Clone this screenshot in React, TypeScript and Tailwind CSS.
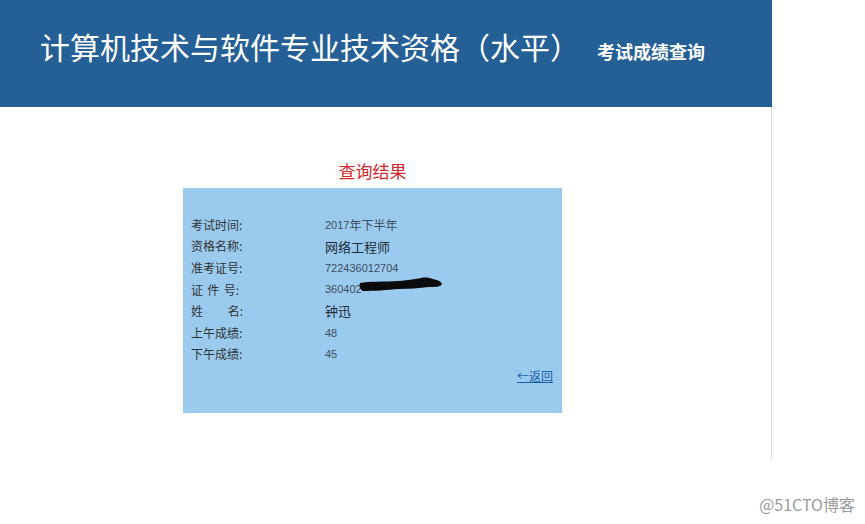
const rows: { label: React.ReactNode; value: React.ReactNode }[] = [
  {
    label: "考试时间:",
    value: (
      <>
        <span className="font-['Liberation_Sans',sans-serif] text-[11px]">2017</span>
        <span>年下半年</span>
      </>
    ),
  },
  { label: "资格名称:", value: <span className="text-[13px] text-[#1f2a36]">网络工程师</span> },
  {
    label: "准考证号:",
    value: <span className="font-['Liberation_Sans',sans-serif] text-[11px]">722436012704</span>,
  },
  {
    label: <span className="flex w-[52px] justify-between pr-[4px]"><span>证</span><span>件</span><span>号:</span></span>,
    value: <span className="font-['Liberation_Sans',sans-serif] text-[11px]">360402</span>,
  },
  {
    label: <span className="flex w-[52px] justify-between"><span>姓</span><span>名:</span></span>,
    value: <span className="text-[13px] text-[#1f2a36]">钟迅</span>,
  },
  { label: "上午成绩:", value: <span className="font-['Liberation_Sans',sans-serif] text-[11px]">48</span> },
  { label: "下午成绩:", value: <span className="font-['Liberation_Sans',sans-serif] text-[11px]">45</span> },
];

export default function App() {
  return (
    <main className="relative h-[524px] w-[865px] overflow-hidden bg-white font-['Noto_Sans_CJK_SC',sans-serif]">
      <div className="w-[772px]">
        {/* 页头 */}
        <header className="flex h-[107px] items-baseline bg-[#246096] pl-[40px] pt-[26px] text-white">
          <h1 className="font-['Noto_Sans_CJK_SC',sans-serif] text-[30px] leading-[40px]">
            计算机技术与软件专业技术资格（水平）
          </h1>
          <span className="ml-[17px] text-[18px] font-bold">考试成绩查询</span>
        </header>

        {/* 结果区 */}
        <section className="flex h-[353px] flex-col items-center border-r border-[#dcdcdc] pr-[26px] pt-[52px]">
          <h2 className="text-[17px] leading-[24px] text-[#d3262b]">查询结果</h2>
          <div className="mt-[5px] h-[225px] w-[379px] bg-[#9acbee] pl-[8px] pr-[9px] pt-[26px] text-[12px] text-[#333]">
            {rows.map((r, i) => (
              <div key={i} className="flex h-[21.6px] items-center">
                <div className="w-[134px]">{r.label}</div>
                <div className="relative flex items-center text-[12px] text-[#3e4d5c]">
                  {r.value}
                  {i === 3 && (
                    <svg
                      className="absolute left-[34px] top-[-4px]"
                      width="84"
                      height="16"
                      viewBox="0 0 84 16"
                    >
                      <path
                        d="M1 6 C10 4 25 5 40 4 C50 3 56 2 62 1 C67 0 71 1 74 2 C78 3 82 4 83 7 C82 10 76 10 70 10 C60 11 50 12 40 12 C28 13 14 14 4 14 C1 13 0 9 1 6 Z"
                        fill="#0b0b0b"
                      />
                      <path d="M64 3 L72 3 L72 6 L64 6 Z" fill="#0b0b0b" />
                    </svg>
                  )}
                </div>
              </div>
            ))}
            <div className="flex h-[21.6px] items-center justify-end">
              <a href="#" className="text-[12px] text-[#1d5fa8] underline">
                ←返回
              </a>
            </div>
          </div>
        </section>
      </div>

      {/* 水印 */}
      <div className="absolute bottom-[8px] right-[10px] text-[16px] text-[#9a9a9a]">@51CTO博客</div>
    </main>
  );
}
